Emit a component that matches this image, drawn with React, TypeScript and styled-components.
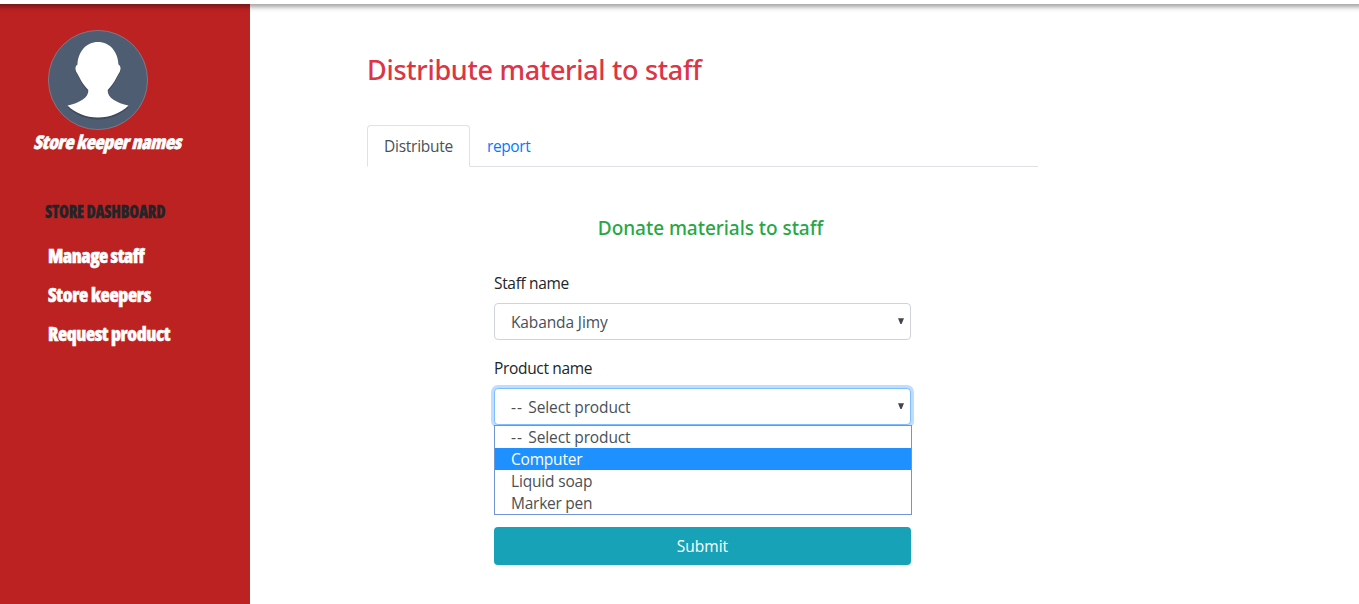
import React from "react";
import styled, { createGlobalStyle } from "styled-components";

const GlobalStyle = createGlobalStyle`
  *, *::before, *::after { box-sizing: border-box; }
  body {
    margin: 0;
    overflow: hidden;
    background: #fff;
    color: #212529;
    font-family: "Open Sans", "Noto Sans", sans-serif;
    font-size: 15.5px;
    line-height: 24px;
  }
`;

const Page = styled.div`
  display: flex;
  flex-direction: column;
  height: 604px;
`;

const TopBar = styled.header`
  flex: none;
  position: relative;
  z-index: 1;
  height: 4px;
  margin: 0 -8px;
  background: #fff;
  box-shadow: 0 1px 6px rgba(0, 0, 0, 0.75);
`;

const Body = styled.div`
  display: flex;
  flex: 1;
`;

const Sidebar = styled.aside`
  flex: none;
  width: 250px;
  padding: 26px 0 0 48px;
  background: #bd2222;
  font-family: "Open Sans", sans-serif;
  font-stretch: 75%;
  font-weight: 800;
`;

const Avatar = styled.svg`
  display: block;
  width: 100px;
  height: 100px;
`;

const KeeperName = styled.div`
  width: max-content;
  margin: 0 0 0 -13px;
  color: #fff;
  font-size: 19px;
  letter-spacing: -0.35px;
  white-space: nowrap;
  -webkit-text-stroke: 0.5px #fff;
  transform: skewX(-14deg);
`;

const MenuTitle = styled.div`
  width: max-content;
  margin: 45px 0 0 -3px;
  color: #212529;
  font-size: 17.5px;
  letter-spacing: -0.2px;
  white-space: nowrap;
  transform: scaleX(0.9);
  transform-origin: left;
  -webkit-text-stroke: 0.3px #212529;
`;

const Menu = styled.nav`
  display: flex;
  flex-direction: column;
  gap: 15px;
  margin-top: 21px;
`;

const MenuItem = styled.a<{ $spacing: number }>`
  color: #fff;
  font-size: 19px;
  letter-spacing: ${(p) => p.$spacing}px;
  white-space: nowrap;
  -webkit-text-stroke: 0.5px #fff;
`;

const Main = styled.main`
  width: 671px;
  margin-left: 117px;
  padding-top: 49px;
`;

const Title = styled.h1`
  margin: 0;
  color: #dc3545;
  font-family: "Noto Sans", sans-serif;
  font-size: 27px;
  font-weight: 500;
  line-height: 34px;
  letter-spacing: -0.3px;
`;

const Tabs = styled.div`
  display: flex;
  height: 42px;
  margin-top: 38px;
  border-bottom: 1px solid #dee2e6;
`;

const Tab = styled.a<{ $active?: boolean }>`
  height: 42px;
  padding: 8px 16px;
  border: 1px solid ${(p) => (p.$active ? "#dee2e6" : "transparent")};
  border-bottom-color: ${(p) => (p.$active ? "#fff" : "transparent")};
  border-radius: 4px 4px 0 0;
  color: ${(p) => (p.$active ? "#495057" : "#007bff")};
  letter-spacing: ${(p) => (p.$active ? -0.25 : -0.4)}px;
  &:first-child { width: 103px; }
`;

const Form = styled.form`
  width: 417px;
  margin: 49px 0 0 127px;
`;

const FormTitle = styled.h2`
  margin: 0 0 31px 16px;
  color: #28a745;
  font-family: "Noto Sans", sans-serif;
  font-size: 19px;
  font-weight: 550;
  line-height: 24px;
  letter-spacing: -0.05px;
  text-align: center;
`;

const Field = styled.div`
  position: relative;
  margin-bottom: 16px;
`;

const Label = styled.label`
  display: block;
  margin-bottom: 8px;
  letter-spacing: -0.33px;
`;

const Select = styled.div<{ $focused?: boolean }>`
  display: flex;
  justify-content: space-between;
  height: 37px;
  padding: 6px 5px 5px 16px;
  border: 1px solid ${(p) => (p.$focused ? "#80bdff" : "#ced4da")};
  border-radius: 4px;
  background: #fff;
  box-shadow: ${(p) => (p.$focused ? "0 0 0 3px rgba(0, 123, 255, 0.25)" : "none")};
  color: #495057;
  letter-spacing: -0.12px;
`;

const Dashes = styled.span`
  letter-spacing: 1.1px;
`;

const Caret = styled.svg`
  width: 8px;
  height: 7px;
  margin-top: 8px;
`;

const Options = styled.div`
  position: absolute;
  top: 69px;
  left: 0;
  width: 418px;
  border: 1px solid #7094d6;
  background: #fff;
`;

const Option = styled.div<{ $highlighted?: boolean; $spacing: number }>`
  height: 22px;
  padding-left: 16px;
  background: ${(p) => (p.$highlighted ? "#1e90ff" : "#fff")};
  color: ${(p) => (p.$highlighted ? "#fff" : "#495057")};
  line-height: 22px;
  letter-spacing: ${(p) => p.$spacing}px;
`;

const Submit = styled.button`
  display: block;
  width: 417px;
  height: 38px;
  margin-top: 102px;
  padding: 0 0 1px;
  border: 0;
  border-radius: 4px;
  background: #17a2b8;
  color: #fff;
  font: inherit;
`;

const Arrow = () => (
  <Caret viewBox="0 0 8 7">
    <path d="M1 0.3h6L4.6 6h-1.2z" fill="#40474e" />
  </Caret>
);

const Placeholder = () => (
  <span>
    <Dashes>-- </Dashes>Select product
  </span>
);

const menu = [
  { label: "Manage staff", spacing: -0.5 },
  { label: "Store keepers", spacing: -0.3 },
  { label: "Request product", spacing: -0.4 },
];

const options = [
  { id: "none", label: <Placeholder />, spacing: -0.12 },
  { id: "computer", label: "Computer", spacing: -0.2, highlighted: true },
  { id: "soap", label: "Liquid soap", spacing: -0.17 },
  { id: "pen", label: "Marker pen", spacing: -0.25 },
];

export default function App() {
  return (
    <Page>
      <GlobalStyle />
      <TopBar />
      <Body>
        <Sidebar>
          <Avatar viewBox="0 0 100 100">
            <circle cx="50" cy="50" r="49.6" fill="#4f5d73" stroke="#8f8692" strokeWidth="0.7" />
            <path
              d="M50 14C38 14 30.5 23 29.7 35.5C27 37 26.5 39.5 28 43C31 46 33 55 40 61C41 69 31 73.5 19.5 77.5C27 84.5 38 89.5 50 89.5C62 89.5 73 84.5 80.5 77.5C69 73.5 59 69 60 61C67 55 69 46 72 43C73.5 39.5 73 37 70.8 35.5C70 23 62 14 50 14Z"
              fill="#3f4a5c"
            />
            <path
              d="M50 12C38 12 30 22 29.5 34.5C27.3 36 26.7 38.5 28.3 42C31 45.5 32.5 52 40.3 60C41 68 31 73 19.5 75.5C27 83 38 87.5 50 87.5C62 87.5 73 83 80.5 75.5C69 73 59 68 59.7 60C67.5 52 69 45.5 71.7 42C73.3 38.5 72.7 36 70.5 34.5C70 22 62 12 50 12Z"
              fill="#fff"
            />
          </Avatar>
          <KeeperName>Store keeper names</KeeperName>
          <MenuTitle>STORE DASHBOARD</MenuTitle>
          <Menu>
            {menu.map((item) => (
              <MenuItem key={item.label} $spacing={item.spacing}>{item.label}</MenuItem>
            ))}
          </Menu>
        </Sidebar>
        <Main>
          <Title>Distribute material to staff</Title>
          <Tabs>
            <Tab $active>Distribute</Tab>
            <Tab>report</Tab>
          </Tabs>
          <Form>
            <FormTitle>Donate materials to staff</FormTitle>
            <Field>
              <Label>Staff name</Label>
              <Select>Kabanda Jimy<Arrow /></Select>
            </Field>
            <Field>
              <Label>Product name</Label>
              <Select $focused><Placeholder /><Arrow /></Select>
              <Options>
                {options.map((o) => (
                  <Option key={o.id} $highlighted={o.highlighted} $spacing={o.spacing}>{o.label}</Option>
                ))}
              </Options>
            </Field>
            <Submit type="button">Submit</Submit>
          </Form>
        </Main>
      </Body>
    </Page>
  );
}
